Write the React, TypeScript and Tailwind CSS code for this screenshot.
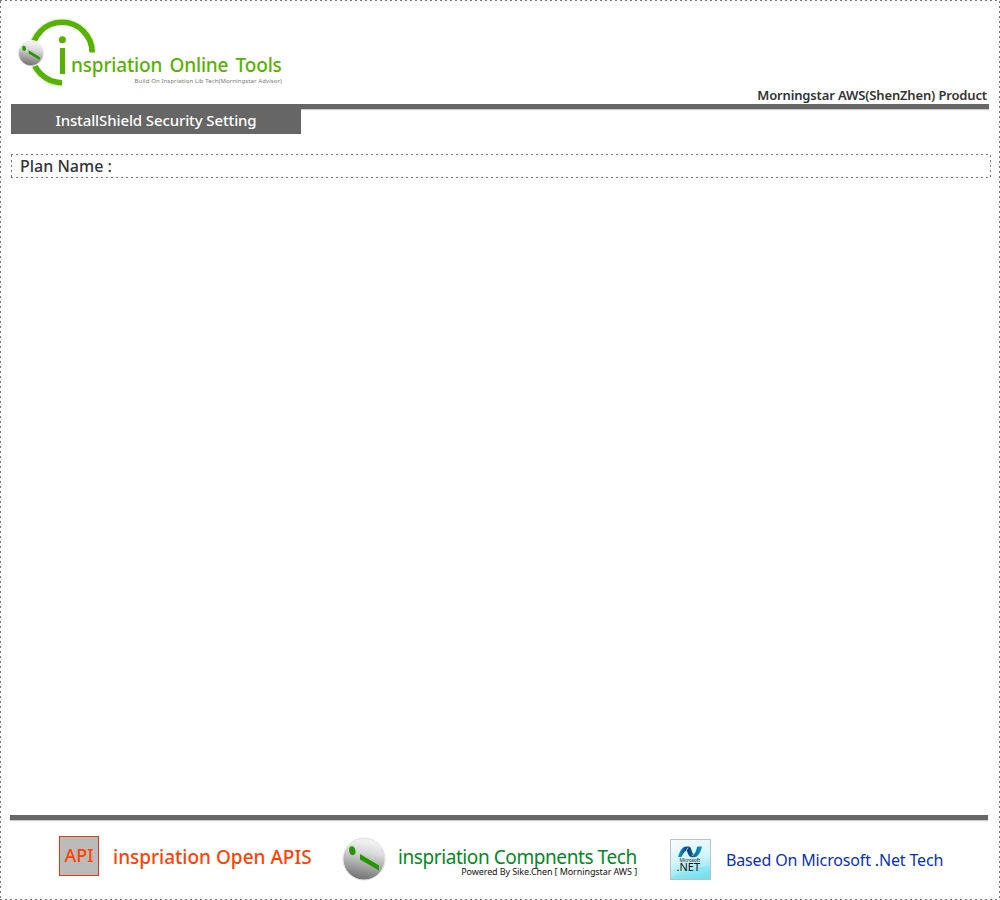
import React from "react";

function Ball({ className }: { className: string }) {
  return (
    <svg viewBox="0 0 44 44" className={className}>
      <defs>
        <linearGradient id="ball" x1="0.6" y1="0" x2="0.4" y2="1">
          <stop offset="0.1" stopColor="#f0f0f0" />
          <stop offset="0.35" stopColor="#d8d8d8" />
          <stop offset="1" stopColor="#6e6e6e" />
        </linearGradient>
      </defs>
      <circle cx="22" cy="22" r="21" fill="url(#ball)" stroke="#e2e2e2" strokeWidth="1" />
      <ellipse cx="10.3" cy="13.7" rx="3.1" ry="4.5" transform="rotate(-12 10.3 13.7)" fill="#239600" />
      <path d="M18 17 L37 28.5 V33.5 L18 22.5 Z" fill="#239600" />
    </svg>
  );
}

function Logo() {
  return (
    <svg viewBox="0 0 90 76" className="h-[76px] w-[90px] shrink-0">
      <g fill="none">
        <path d="M85.6 40.5 A33.6 33.6 0 1 0 52 74.1" stroke="#c9ebb3" strokeWidth="0.8" />
        <path d="M82.2 40.5 A30.2 30.2 0 1 0 52 70.7" stroke="#55b300" strokeWidth="5.6" />
      </g>
      <circle cx="21" cy="41.3" r="13.4" fill="#fff" />
      <circle cx="52.4" cy="27.7" r="3.5" fill="#55b300" />
      <rect x="50" y="36" width="5" height="26" fill="#55b300" />
      <svg x="8" y="28.3" width="26" height="26">
        <Ball className="h-[26px] w-[26px]" />
      </svg>
    </svg>
  );
}

function DotNetIcon() {
  return (
    <svg viewBox="0 0 41 41" className="h-[41px] w-[41px]">
      <defs>
        <linearGradient id="tile" x1="0.3" y1="0" x2="0.55" y2="1">
          <stop offset="0" stopColor="#f3fcfe" />
          <stop offset="0.5" stopColor="#d3f5fa" />
          <stop offset="1" stopColor="#7de4f0" />
        </linearGradient>
        <linearGradient id="wave" x1="0" y1="0" x2="1" y2="0">
          <stop offset="0" stopColor="#1d9bc9" />
          <stop offset="0.4" stopColor="#06417a" />
          <stop offset="1" stopColor="#159ac8" />
        </linearGradient>
      </defs>
      <rect x="0.5" y="0.5" width="40" height="40" fill="url(#tile)" stroke="#b9c3c6" />
      <path d="M1 40 Q12 29 40 27 V40 Z" fill="#55d9ea" opacity="0.2" />
      <path d="M8 18 C10 12 12 7.5 16.5 7.5 H19 C22 8 21 14 24 15 C26 14 26 10 27.5 7.5 H32 C31 13 28 18.3 24 18.3 H22 C18 18 18 13 16.5 11.5 C14 13 13 15 11.5 18 Z" fill="url(#wave)" />
      <path d="M13.5 17.5 L18 8.5 M22.5 17 L26.5 8.5" stroke="#d9f6fb" strokeWidth="0.7" />
      <text x="9.5" y="23" fontFamily="Noto Sans, sans-serif" fontSize="4.8" fill="#222" textLength="20.5">Microsoft</text>
      <text x="6.5" y="32" fontFamily="Noto Sans, sans-serif" fontSize="11.5" fill="#111" textLength="23.5" lengthAdjust="spacingAndGlyphs">.NET</text>
    </svg>
  );
}

const rowDash = "h-px shrink-0 bg-[repeating-linear-gradient(90deg,#777_0_2px,transparent_2px_5px)]";
const columnDash = "w-px shrink-0 bg-[repeating-linear-gradient(180deg,#777_0_2px,transparent_2px_5px)]";

function DashedBox({ className, children }: { className: string; children: React.ReactNode }) {
  return (
    <div className={`flex flex-col ${className}`}>
      <div className={rowDash} />
      <div className="flex min-h-0 flex-1">
        <div className={columnDash} />
        <div className="flex min-w-0 flex-1 flex-col">{children}</div>
        <div className={columnDash} />
      </div>
      <div className={rowDash} />
    </div>
  );
}

export default function App() {
  return (
    <DashedBox className="h-[900px] w-[1000px] bg-white font-['Noto_Sans',sans-serif] whitespace-nowrap">
      <header className="flex h-[103px] shrink-0 justify-between pr-3 pl-[9px]">
        <div className="flex pt-[11px]">
          <Logo />
          <div className="-ml-[29px] w-[211px] pt-[39px]">
            <div className="text-[19px] leading-[28px] font-medium tracking-[-0.17px] [word-spacing:2.5px] text-[#55b300]">nspriation Online Tools</div>
            <div className="-mt-[2px] text-right text-[6px] leading-[8px] tracking-[0.1px] text-[#777]">Build On Inspriation Lib Tech(Morningstar Advisor)</div>
          </div>
        </div>
        <div className="self-end text-[13px] leading-[18px] font-semibold tracking-[-0.15px] text-[#333]">Morningstar AWS(ShenZhen) Product</div>
      </header>
      <div className="mr-[10px] ml-[10px] h-[30px] shrink-0">
        <div className="h-[5px] bg-[#666] shadow-[0_1px_1px_#ccc]" />
        <div className="relative h-[25px] w-[290px] bg-[#666] text-center text-[15px] leading-[22px] font-medium tracking-[-0.12px] text-white">InstallShield Security Setting</div>
      </div>
      <DashedBox className="mt-5 mr-[8px] ml-[10px] h-6 shrink-0">
        <div className="pl-2 text-[16px] leading-[22px] font-medium text-[#333]">Plan Name :</div>
      </DashedBox>
      <main className="flex-1" />
      <div className="mr-[11px] ml-[9px] h-[5px] shrink-0 bg-[#666] shadow-[0_1px_1px_#ccc]" />
      <footer className="flex h-[79px] shrink-0 pl-[58px]">
        <div className="mt-4 h-10 w-10 border border-[#dc3c0a] bg-[#bbb] text-center text-[18px] leading-[37px] font-medium text-[#ff4200]">API</div>
        <div className="ml-[14px] w-[229px] pt-[23px] text-[19px] leading-[28px] font-medium text-[#ff4200]">inspriation Open APIS</div>
        <div className="pt-[17px]">
          <Ball className="h-11 w-11" />
        </div>
        <div className="ml-3 w-[239px] pt-[23px]">
          <div className="text-[19px] leading-[28px] tracking-[-0.42px] text-[#008a20]">inspriation Compnents Tech</div>
          <div className="-mt-[5px] text-right text-[9px] leading-[12px] tracking-[-0.1px] text-[#111]">Powered By Sike.Chen [ Morningstar AWS ]</div>
        </div>
        <div className="ml-[33px] pt-[19px]">
          <DotNetIcon />
        </div>
        <div className="ml-[15px] pt-[28px] text-[16px] leading-6 tracking-[-0.15px] text-[#0a32b4]">Based On Microsoft .Net Tech</div>
      </footer>
    </DashedBox>
  );
}
